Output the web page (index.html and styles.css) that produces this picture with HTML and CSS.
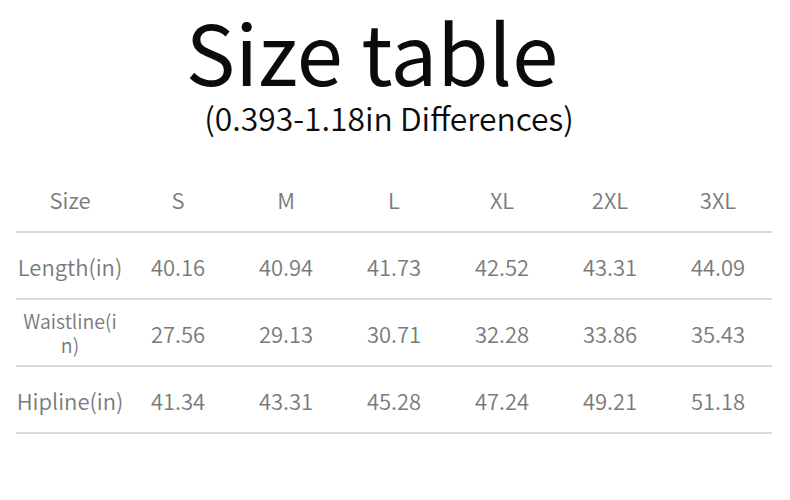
FILE: index.html
```html
<!DOCTYPE html>
<html>
<head>
<meta charset="utf-8">
<link rel="stylesheet" href="styles.css">
</head>
<body>
<div class="page">
  <h1 class="title">Size table</h1>
  <p class="subtitle">(0.393-1.18in Differences)</p>
  <table class="sizes">
    <tr class="head"><td>Size</td><td>S</td><td>M</td><td>L</td><td>XL</td><td>2XL</td><td>3XL</td></tr>
    <tr><td>Length(in)</td><td>40.16</td><td>40.94</td><td>41.73</td><td>42.52</td><td>43.31</td><td>44.09</td></tr>
    <tr><td class="small">Waistline(in)</td><td>27.56</td><td>29.13</td><td>30.71</td><td>32.28</td><td>33.86</td><td>35.43</td></tr>
    <tr><td>Hipline(in)</td><td>41.34</td><td>43.31</td><td>45.28</td><td>47.24</td><td>49.21</td><td>51.18</td></tr>
  </table>
</div>
</body>
</html>
```
FILE: styles.css
```css
html, body { margin: 0; padding: 0; background: #fff; }
body { font-family: "Noto Sans CJK SC", "Noto Sans", sans-serif; }
.page { width: 790px; height: 500px; padding-top: 1px; box-sizing: border-box; overflow: hidden; }
.title {
  margin: 0; font-weight: 400; font-size: 83px; line-height: 90px;
  color: #0b0b0b; text-align: center; padding-right: 46px; margin-top: 4px;
}
.subtitle {
  margin: 0; font-size: 31.8px; line-height: 40px; color: #0b0b0b; font-weight: 350;
  text-align: center; padding-right: 12px; margin-top: 2px;
}
.sizes {
  margin: 29px 0 0 16px; border-collapse: collapse; width: 756px; table-layout: fixed;
}
.sizes td {
  width: 108px; text-align: center; font-size: 22px; color: #7a7a7a; font-weight: 350;
  height: 65px; padding: 0; border-bottom: 2px solid #d9d9d9; line-height: 26px;
}
.sizes td.small { font-size: 19.5px; line-height: 24px; padding: 0 4px; word-break: break-all; }
```
